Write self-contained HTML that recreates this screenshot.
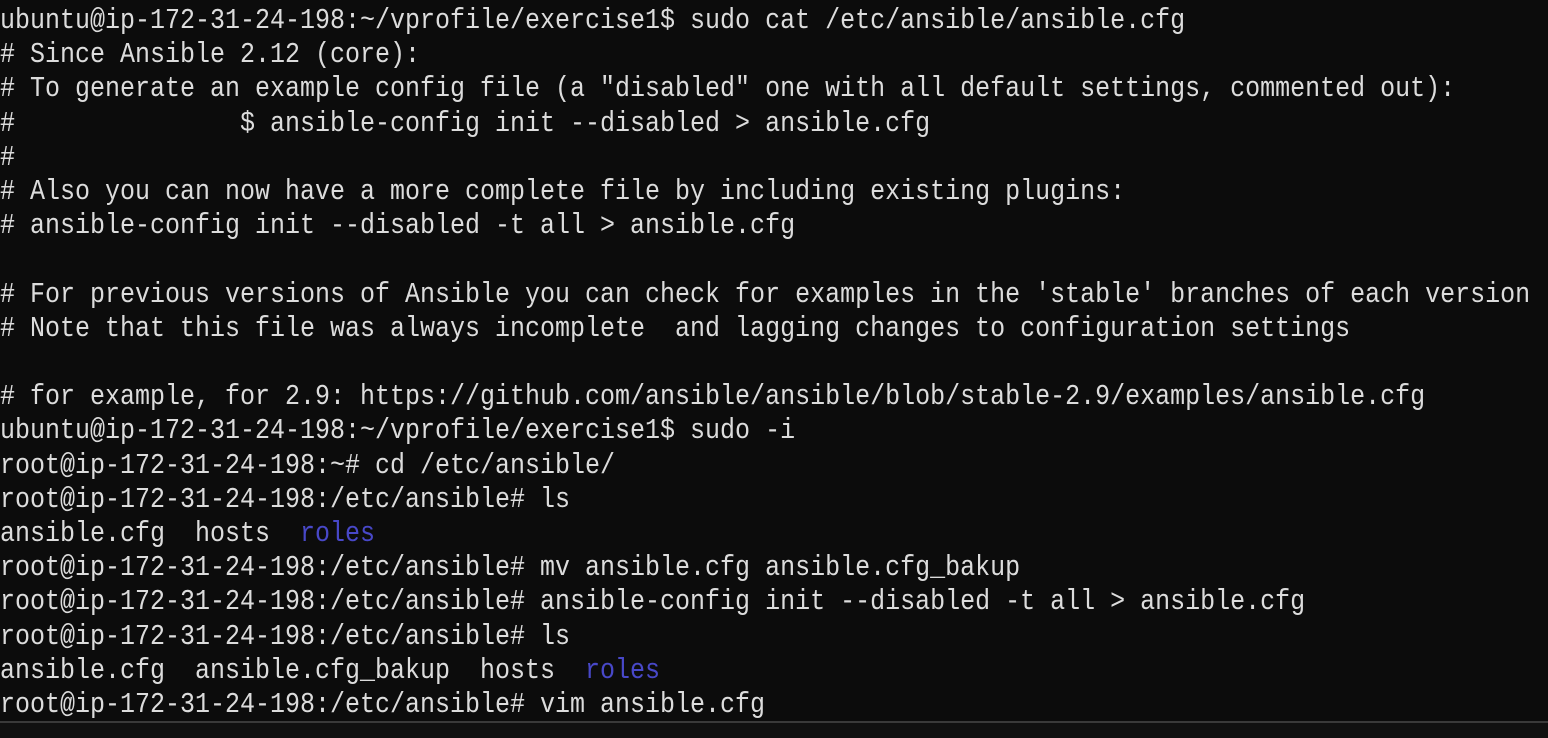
<!DOCTYPE html>
<html><head><meta charset="utf-8"><style>
html,body{margin:0;padding:0;background:#0c0c0c;width:1548px;height:738px;overflow:hidden}
pre{margin:0;position:absolute;left:0;top:4px;font-family:"Liberation Mono",monospace;font-size:29px;line-height:34.2px;color:#dcdcdc;white-space:pre;letter-spacing:0;transform:scaleX(0.862);transform-origin:0 0}
.b{color:#4848c8}
.bar{position:absolute;left:0;top:721px;width:1548px;height:2px;background:#3a3a3a}
.bot{position:absolute;left:0;top:723px;width:1548px;height:15px;background:#111}
</style></head><body>
<pre>ubuntu@ip-172-31-24-198:~/vprofile/exercise1$ sudo cat /etc/ansible/ansible.cfg
# Since Ansible 2.12 (core):
# To generate an example config file (a "disabled" one with all default settings, commented out):
#               $ ansible-config init --disabled &gt; ansible.cfg
#
# Also you can now have a more complete file by including existing plugins:
# ansible-config init --disabled -t all &gt; ansible.cfg

# For previous versions of Ansible you can check for examples in the 'stable' branches of each version
# Note that this file was always incomplete  and lagging changes to configuration settings

# for example, for 2.9: https://github.com/ansible/ansible/blob/stable-2.9/examples/ansible.cfg
ubuntu@ip-172-31-24-198:~/vprofile/exercise1$ sudo -i
root@ip-172-31-24-198:~# cd /etc/ansible/
root@ip-172-31-24-198:/etc/ansible# ls
ansible.cfg  hosts  <span class="b">roles</span>
root@ip-172-31-24-198:/etc/ansible# mv ansible.cfg ansible.cfg_bakup
root@ip-172-31-24-198:/etc/ansible# ansible-config init --disabled -t all &gt; ansible.cfg
root@ip-172-31-24-198:/etc/ansible# ls
ansible.cfg  ansible.cfg_bakup  hosts  <span class="b">roles</span>
root@ip-172-31-24-198:/etc/ansible# vim ansible.cfg</pre>
<div class="bar"></div><div class="bot"></div>
</body></html>
